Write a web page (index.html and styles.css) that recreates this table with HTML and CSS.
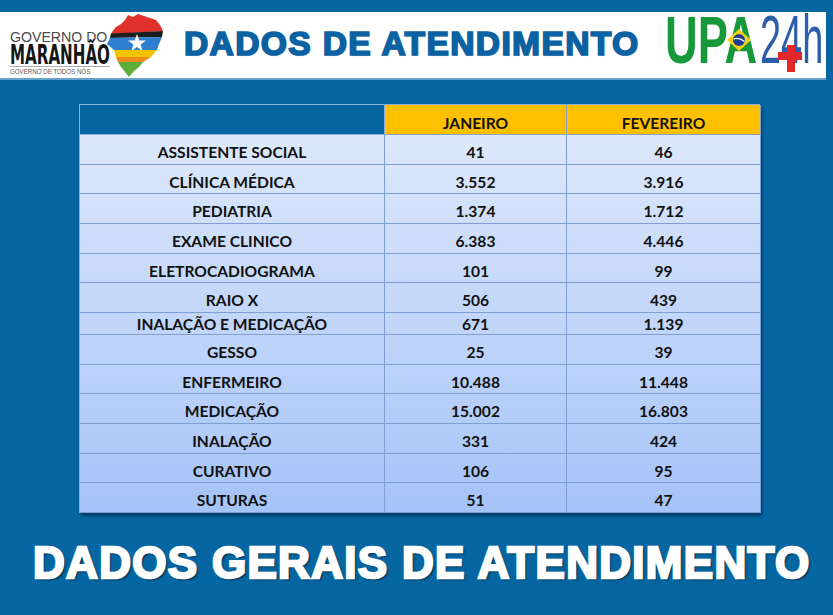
FILE: index.html
```html
<!DOCTYPE html>
<html lang="pt-BR">
<head>
<meta charset="utf-8">
<title>Dados de Atendimento</title>
<link rel="stylesheet" href="styles.css">
</head>
<body>
<header class="top">
  <div class="gov-logo">
    <svg width="168" height="66" viewBox="0 12 168 66" xmlns="http://www.w3.org/2000/svg">
      <text transform="translate(10,42) scale(1.01,1)" class="gov-t1">GOVERNO DO</text>
      <text transform="translate(10,64) scale(0.56,1)" class="gov-t2">MARANHÃO</text>
      <rect x="10" y="66" width="100" height="0.8" fill="#9a9a9a"/>
      <text transform="translate(10,74) scale(0.95,1)" class="gov-t3">GOVERNO DE TODOS NÓS</text>
      <polygon points="112,32 116,27 121,24 125,20 128,15 133,17 138,14 144,16 150,18 156,20 160,25 163,31 111,34" fill="#e0302b"/>
      <polygon points="111,33.5 163,31 162,37 110,38" fill="#1d1d1d"/>
      <polygon points="110,38 162,37 159,44 157,50 114,50 107,44" fill="#2f7fd0"/>
      <polygon points="137,34 139.3,40.5 146,40.5 140.6,44.4 142.6,51 137,47 131.4,51 133.4,44.4 128,40.5 134.7,40.5" fill="#ffffff"/>
      <polygon points="114,50 157,50 151,57 116,57" fill="#f5c400"/>
      <polygon points="116,57 151,57 143,62 118,62" fill="#f08a1c"/>
      <polygon points="118,62 143,62 139,67 134,71 129,77 125,72 121,67" fill="#5cae3a"/>
    </svg>
  </div>
  <h1 class="title">DADOS DE ATENDIMENTO</h1>
  <div class="upa-logo">
    <svg width="176" height="66" viewBox="650 12 176 66" xmlns="http://www.w3.org/2000/svg">
      <text transform="translate(665,63) scale(0.686,1)" class="upa-t">UPA</text>
      <polygon points="727,40 739,29 751,40 739,51" fill="#f7d117"/>
      <circle cx="739" cy="40" r="6" fill="#1f3f94"/>
      <path d="M733.5,39 Q739,37 744.5,41.5" stroke="#ffffff" stroke-width="1.3" fill="none"/>
      <text transform="translate(760,63) scale(0.55,1)" class="h24-t">24h</text>
      <rect x="778" y="52" width="24" height="8" fill="#e3262a"/>
      <rect x="787" y="45" width="8" height="27" fill="#e3262a"/>
    </svg>
  </div>
</header>

<main class="sheet">
  <div class="grid">
    <div class="cell head blank"></div>
    <div class="cell head gold">JANEIRO</div>
    <div class="cell head gold last">FEVEREIRO</div>

    <div class="cell">ASSISTENTE SOCIAL</div><div class="cell">41</div><div class="cell last">46</div>
    <div class="cell">CLÍNICA MÉDICA</div><div class="cell">3.552</div><div class="cell last">3.916</div>
    <div class="cell">PEDIATRIA</div><div class="cell">1.374</div><div class="cell last">1.712</div>
    <div class="cell">EXAME CLINICO</div><div class="cell">6.383</div><div class="cell last">4.446</div>
    <div class="cell">ELETROCADIOGRAMA</div><div class="cell">101</div><div class="cell last">99</div>
    <div class="cell">RAIO X</div><div class="cell">506</div><div class="cell last">439</div>
    <div class="cell short">INALAÇÃO E MEDICAÇÃO</div><div class="cell short">671</div><div class="cell short last">1.139</div>
    <div class="cell">GESSO</div><div class="cell">25</div><div class="cell last">39</div>
    <div class="cell">ENFERMEIRO</div><div class="cell">10.488</div><div class="cell last">11.448</div>
    <div class="cell">MEDICAÇÃO</div><div class="cell">15.002</div><div class="cell last">16.803</div>
    <div class="cell">INALAÇÃO</div><div class="cell">331</div><div class="cell last">424</div>
    <div class="cell">CURATIVO</div><div class="cell">106</div><div class="cell last">95</div>
    <div class="cell bottom">SUTURAS</div><div class="cell bottom">51</div><div class="cell bottom last">47</div>
  </div>
</main>

<footer class="big">DADOS GERAIS DE ATENDIMENTO</footer>
</body>
</html>
```

FILE: styles.css
```css
html, body {
  margin: 0;
  padding: 0;
}
body {
  width: 833px;
  height: 615px;
  overflow: hidden;
  background: #0566a2;
  font-family: "Liberation Sans", Arial, sans-serif;
}

.top {
  margin-top: 12px;
  height: 66px;
  background: #ffffff;
  display: flex;
  align-items: center;
  margin-right: 7px;
  box-shadow: 0 2px 0 rgba(200, 220, 240, 0.5);
}
.gov-logo, .upa-logo {
  height: 66px;
  flex: none;
}
.gov-logo svg, .upa-logo svg {
  display: block;
}
.gov-t1 {
  font-family: "Liberation Sans", Arial, sans-serif;
  font-size: 14px;
  fill: #4b4b4b;
}
.gov-t2 {
  font-family: "DejaVu Sans", sans-serif;
  font-weight: bold;
  font-size: 27px;
  fill: #151515;
}
.gov-t3 {
  font-family: "Liberation Sans", Arial, sans-serif;
  font-size: 6.5px;
  fill: #5a5a5a;
}
.upa-t {
  font-family: "Liberation Sans", Arial, sans-serif;
  font-weight: bold;
  font-size: 66px;
  fill: #17993b;
}
.h24-t {
  font-family: "Liberation Sans", Arial, sans-serif;
  font-size: 69px;
  fill: #2b5eaa;
}

.title {
  flex: 1;
  margin: 0;
  padding: 0 0 3px 16px;
  font-family: "Liberation Sans", Arial, sans-serif;
  font-weight: bold;
  font-size: 33.5px;
  line-height: 1;
  color: #0a62a3;
  -webkit-text-stroke: 1.7px #0a62a3;
  letter-spacing: 1.4px;
  text-shadow: 1px 1px 1px rgba(120, 140, 160, 0.6);
  white-space: nowrap;
}

.sheet {
  padding: 26px 0 0 79px;
}
.grid {
  width: 681px;
  display: grid;
  grid-template-columns: 305px 182px 194px;
  grid-template-rows: 30px repeat(6, 29.67px) 22px repeat(6, 29.67px);
  background: linear-gradient(#dee9fb 5%, #a6c3f7 100%);
  box-shadow: 2px 3px 3px rgba(0, 20, 50, 0.55);
  border-left: 1px solid #8eaede;
  border-top: 1px solid #8eaede;
  box-sizing: border-box;
}
.cell {
  box-sizing: border-box;
  border-right: 1px solid #7f9fd3;
  border-bottom: 1px solid #7f9fd3;
  display: flex;
  align-items: flex-end;
  justify-content: center;
  padding-bottom: 2.5px;
  font-family: Lato, "Open Sans", sans-serif;
  font-weight: bold;
  font-size: 15.6px;
  color: #111111;
  white-space: nowrap;
}
.cell.short {
  padding-bottom: 1px;
}
.head.blank {
  background: #0566a2;
  border-color: #8eaede;
}
.head.gold {
  background: #ffc000;
  padding-bottom: 2px;
  border-color: #8a9fc0;
}

.big {
  margin: 28px 0 0 33px;
  font-family: "Liberation Sans", Arial, sans-serif;
  font-weight: bold;
  font-size: 44px;
  line-height: 1;
  color: #ffffff;
  -webkit-text-stroke: 2.4px #ffffff;
  letter-spacing: 1.3px;
  text-shadow: 2px 2px 2px rgba(0, 0, 0, 0.55);
  white-space: nowrap;
}
```
